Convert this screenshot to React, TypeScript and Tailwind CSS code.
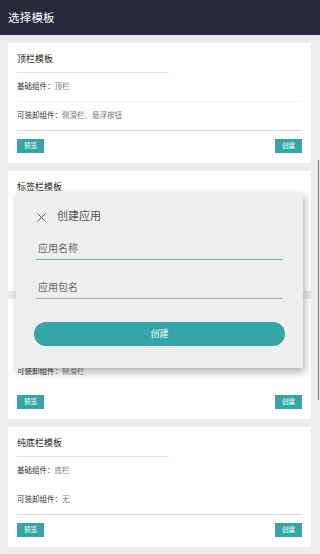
import React from 'react';

const font = "font-['Roboto','Noto_Sans_CJK_SC',sans-serif]";

type Template = { title: string; base: string; extra: string; faintRow?: boolean; noBottomLine?: boolean };

const templates: Template[] = [
  { title: '顶栏模板', base: '顶栏', extra: '侧滑栏、悬浮按钮', faintRow: true },
  { title: '标签栏模板', base: '标签栏', extra: '侧滑栏、悬浮按钮', faintRow: true },
  { title: '底栏模板', base: '底栏', extra: '侧滑栏', faintRow: true, noBottomLine: true },
  { title: '纯底栏模板', base: '底栏', extra: '无' },
];

function TemplateCard({ t }: { t: Template }) {
  return (
    <div className="h-[120px] bg-white px-[9px] flex flex-col">
      <div className="h-[29px] flex items-center pt-[2px] text-[9px] leading-[12px] text-[#222]">{t.title}</div>
      <div className="w-[152px] h-px bg-[#e2e2e2]" />
      <div className="h-[28px] flex items-center text-[7.5px] leading-[10px]">
        <span className="text-[#333]">基础组件：</span>
        <span className="text-[#777]">{t.base}</span>
      </div>
      <div className={t.faintRow ? 'h-px bg-[#f3f3f3]' : 'h-px bg-transparent'} />
      <div className="h-[28px] flex items-center text-[7.5px] leading-[10px]">
        <span className="text-[#333]">可装卸组件：</span>
        <span className="text-[#777]">{t.extra}</span>
      </div>
      <div className={t.noBottomLine ? 'h-px bg-transparent' : 'h-px bg-[#dedede]'} />
      <div className="mt-[8px] flex justify-between">
        <button className="w-[27px] h-[14px] bg-[#37a5a7] text-white text-[6.5px] leading-[14px] text-center">预览</button>
        <button className="w-[27px] h-[14px] bg-[#37a5a7] text-white text-[6.5px] leading-[14px] text-center">创建</button>
      </div>
    </div>
  );
}

export default function App() {
  return (
    <div className={`relative w-[320px] h-[554px] overflow-hidden bg-[#ededed] ${font}`}>
      <div className="h-[35px] bg-[#272a3b] flex items-center pl-[8px]">
        <span className="text-white text-[11.5px] leading-[14px] tracking-[0.2px]">选择模板</span>
      </div>
      <div className="px-[8px] pt-[8px] flex flex-col gap-[8px] w-[319px]">
        {templates.map((t) => (
          <TemplateCard key={t.title} t={t} />
        ))}
      </div>

      {/* scrollbar */}
      <div className="absolute right-[1px] top-[160px] w-[1px] h-[240px] bg-black/50" />

      {/* create app dialog */}
      <div className="absolute left-[16px] top-[192px] w-[287px] h-[176px] bg-[#eeeeee] shadow-[2px_4px_8px_rgba(0,0,0,0.3)] flex flex-col">
        <div className="h-[50px] flex items-center pl-[21px]">
          <svg width="9" height="9" viewBox="0 0 9 9" className="text-[#555]">
            <path d="M0.5 0.5L8.5 8.5M8.5 0.5L0.5 8.5" stroke="currentColor" strokeWidth="1" />
          </svg>
          <span className="ml-[11px] text-[11px] leading-[14px] text-[#555]">创建应用</span>
        </div>
        <div className="mx-[20px] pb-[3px] border-b-[1.5px] border-[#5fb7b8] text-[10px] leading-[14px] text-[#666] pl-[2px]">
          应用名称
        </div>
        <div className="mx-[20px] mt-[21px] pb-[3px] border-b border-[#a8a8a8] text-[10px] leading-[14px] text-[#666] pl-[2px]">
          应用包名
        </div>
        <button className="mx-[18px] mt-[23px] h-[24px] rounded-full bg-[#35a5a7] text-white text-[9px] leading-[24px] text-center">
          创建
        </button>
      </div>
    </div>
  );
}
